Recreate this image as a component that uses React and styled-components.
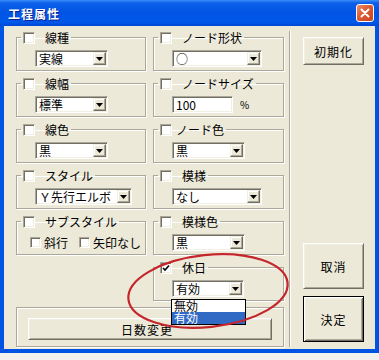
import React from 'react'
import styled, { createGlobalStyle } from 'styled-components'

const GlobalStyle = createGlobalStyle`
  * {
    box-sizing: border-box;
  }
  html,
  body {
    margin: 0;
    padding: 0;
    background: #f3f2ee;
  }
  body {
    font-family: 'Noto Sans CJK JP', 'Liberation Sans', sans-serif;
    font-size: 12px;
    color: #000;
  }
`

const Window = styled.div`
  position: relative;
  width: 379px;
  height: 353px;
  display: flex;
  flex-direction: column;
`

const TitleBar = styled.div`
  height: 26px;
  flex: none;
  display: flex;
  align-items: center;
  justify-content: space-between;
  padding: 0 5px 0 8px;
  background: linear-gradient(
    to bottom,
    #3c8df8 0%,
    #0c5fe9 12%,
    #0054e3 50%,
    #0058ea 85%,
    #0047d4 100%
  );
`

const Title = styled.span`
  color: #fff;
  font-weight: bold;
  font-size: 12px;
  letter-spacing: 1px;
  text-shadow: 1px 1px 0 #0a1d8a;
`

const CloseButton = styled.span`
  width: 18px;
  height: 18px;
  display: flex;
  align-items: center;
  justify-content: center;
  border: 1px solid #fff;
  border-radius: 3px;
  background: linear-gradient(135deg, #ec8d6e 0%, #dc5a33 45%, #c8441f 100%);
`

const Body = styled.div`
  flex: 1;
  display: flex;
  background: #ece9d8;
  border: 4px solid #0054e3;
  border-top: 0;
  padding: 5px 0 0 12px;
`

const Grid = styled.div`
  width: 268px;
  display: grid;
  grid-template-columns: 130px 131px;
  grid-auto-rows: 40px;
  column-gap: 7px;
  row-gap: 6px;
`

const Group = styled.fieldset`
  margin: 0;
  padding: 0 0 0 4px;
  min-width: 0;
  border: 1px solid #aca899;
  box-shadow: inset 1px 1px 0 #fff, 1px 1px 0 #fff;
  grid-column: ${(p) => p.$col || 'auto'};
`

const Legend = styled.legend`
  display: flex;
  align-items: center;
  gap: ${(p) => (p.$gap ?? 10)}px;
  padding: 0 2px;
  height: 13px;
  line-height: 13px;
`

const Content = styled.div`
  position: relative;
  display: flex;
  align-items: center;
  gap: ${(p) => (p.$gap ?? 7)}px;
  margin: ${(p) => p.$top ?? 6}px 0 0 ${(p) => p.$left ?? 14}px;
`

const Check = styled.span`
  flex: none;
  width: ${(p) => p.$size || 12}px;
  height: ${(p) => p.$size || 12}px;
  display: flex;
  align-items: center;
  justify-content: center;
  background: #fff;
  border: 1px solid;
  border-color: #aca899 #fff #fff #aca899;
  box-shadow: inset 1px 1px 0 #716f64, inset -1px -1px 0 #f1efe2;
`

const Option = styled.label`
  display: flex;
  align-items: center;
  gap: 3px;
  line-height: 13px;
`

const Combo = styled.div`
  position: relative;
  width: ${(p) => p.$w}px;
  height: 17px;
  display: flex;
  align-items: center;
  padding: 1px;
  background: #fff;
  border: 1px solid;
  border-color: #aca899 #fff #fff #aca899;
  box-shadow: inset 1px 1px 0 #716f64, inset -1px -1px 0 #f1efe2;
`

const ComboText = styled.span`
  flex: 1;
  padding-left: 2px;
  line-height: 13px;
  white-space: nowrap;
`

const ComboButton = styled.span`
  width: 13px;
  height: 13px;
  flex: none;
  display: flex;
  align-items: center;
  justify-content: center;
  background: #ece9d8;
  border: 1px solid;
  border-color: #f1efe2 #716f64 #716f64 #f1efe2;
  box-shadow: inset -1px -1px 0 #aca899, inset 1px 1px 0 #fff;
`

const List = styled.div`
  position: absolute;
  top: 18px;
  left: -2px;
  width: 75px;
  z-index: 2;
  background: #fff;
  border: 1px solid #000;
`

const ListItem = styled.div`
  height: 12px;
  line-height: 12px;
  padding-left: 2px;
  background: ${(p) => (p.$selected ? '#316ac5' : '#fff')};
  color: ${(p) => (p.$selected ? '#fff' : '#000')};
`

const Unit = styled.span`
  font-size: 10px;
  line-height: 13px;
`

const Frame = styled.div`
  grid-column: 1 / 3;
  padding: 10px 0 0 11px;
  border: 1px solid #aca899;
  box-shadow: inset 1px 1px 0 #fff, 1px 1px 0 #fff;
`

const Button = styled.div`
  width: ${(p) => (p.$w ? `${p.$w}px` : '100%')};
  height: ${(p) => p.$h}px;
  flex: none;
  display: flex;
  align-items: center;
  justify-content: center;
  padding-right: ${(p) => p.$shift || 0}px;
  letter-spacing: 1px;
  background: #ece9d8;
  border: 1px solid;
  border-color: ${(p) =>
    p.$default ? '#000' : '#fff #716f64 #716f64 #fff'};
  box-shadow: ${(p) =>
    p.$default
      ? 'inset 1px 1px 0 #fff, inset -1px -1px 0 #716f64, inset 2px 2px 0 #f1efe2, inset -2px -2px 0 #aca899'
      : 'inset 1px 1px 0 #f1efe2, inset -1px -1px 0 #aca899'};
`

const Separator = styled.div`
  width: 2px;
  margin: 0 0 2px 5px;
  border-left: 1px solid #aca899;
  border-right: 1px solid #fff;
`

const SidePanel = styled.div`
  width: 61px;
  margin-left: 12px;
  display: flex;
  flex-direction: column;
  gap: 7px;
  padding: 6px 0 7px;
`

const Spacer = styled.div`
  flex: 1;
`

const Annotation = styled.svg`
  position: absolute;
  left: 0;
  top: 0;
  pointer-events: none;
  z-index: 3;
`

const Arrow = () => (
  <svg width="7" height="4" viewBox="0 0 7 4">
    <polygon points="0,0 7,0 3.5,4" fill="#000" />
  </svg>
)

const Tick = () => (
  <svg width="8" height="8" viewBox="0 0 8 8">
    <polyline points="1,4 3,6 7,1.5" fill="none" stroke="#000" strokeWidth="1.6" />
  </svg>
)

const Dropdown = ({ width, value, children }) => (
  <Combo $w={width}>
    <ComboText>{value}</ComboText>
    <ComboButton>
      <Arrow />
    </ComboButton>
    {children}
  </Combo>
)

const leftGroups = [
  { name: '線種', value: '実線', width: 73 },
  { name: '線幅', value: '標準', width: 73 },
  { name: '線色', value: '黒', width: 73 },
  { name: 'スタイル', value: 'Ｙ先行エルボ', width: 97 },
]

const rightGroups = [
  { name: 'ノード形状', value: '○', width: 90 },
  { name: 'ノードサイズ', text: '100' },
  { name: 'ノード色', value: '黒', width: 73, gap: 4 },
  { name: '模様', value: 'なし', width: 90 },
  { name: '模様色', value: '黒', width: 73 },
]

const Section = ({ name, value, width, text, gap }) => (
  <Group>
    <Legend $gap={gap}>
      <Check />
      {name}
    </Legend>
    <Content>
      {text ? (
        <>
          <Combo $w={61}>
            <ComboText>{text}</ComboText>
          </Combo>
          <Unit>%</Unit>
        </>
      ) : (
        <Dropdown width={width} value={value} />
      )}
    </Content>
  </Group>
)

export default () => {
  return (
    <Window>
      <GlobalStyle />
      <TitleBar>
        <Title>工程属性</Title>
        <CloseButton>
          <svg width="10" height="10" viewBox="0 0 10 10">
            <path d="M1.5 1.5 L8.5 8.5 M8.5 1.5 L1.5 8.5" stroke="#fff" strokeWidth="2" strokeLinecap="round" />
          </svg>
        </CloseButton>
      </TitleBar>
      <Body>
        <Grid>
          {leftGroups.map((group, index) => (
            <React.Fragment key={`${group.name}-${index}`}>
              <Section {...group} />
              <Section {...rightGroups[index]} />
            </React.Fragment>
          ))}
          <Group>
            <Legend>
              <Check />
              サブスタイル
            </Legend>
            <Content $top={8} $left={9} $gap={11}>
              <Option>
                <Check $size={11} />
                斜行
              </Option>
              <Option>
                <Check $size={11} />
                矢印なし
              </Option>
            </Content>
          </Group>
          <Section {...rightGroups[4]} />
          <Group $col="2">
            <Legend>
              <Check>
                <Tick />
              </Check>
              休日
            </Legend>
            <Content>
              <Dropdown width={72} value="有効">
                <List>
                  <ListItem>無効</ListItem>
                  <ListItem $selected>有効</ListItem>
                </List>
              </Dropdown>
            </Content>
          </Group>
          <Frame>
            <Button $w={244} $h={22} $shift={6}>
              日数変更
            </Button>
          </Frame>
        </Grid>
        <Separator />
        <SidePanel>
          <Button $h={28}>初期化</Button>
          <Spacer />
          <Button $h={46}>取消</Button>
          <Button $h={46} $default>
            決定
          </Button>
        </SidePanel>
      </Body>
      <Annotation width="379" height="360">
        <ellipse
          cx="208"
          cy="291"
          rx="80"
          ry="36"
          transform="rotate(-6 208 291)"
          fill="none"
          stroke="#c4262b"
          strokeWidth="2.2"
        />
      </Annotation>
    </Window>
  )
}
